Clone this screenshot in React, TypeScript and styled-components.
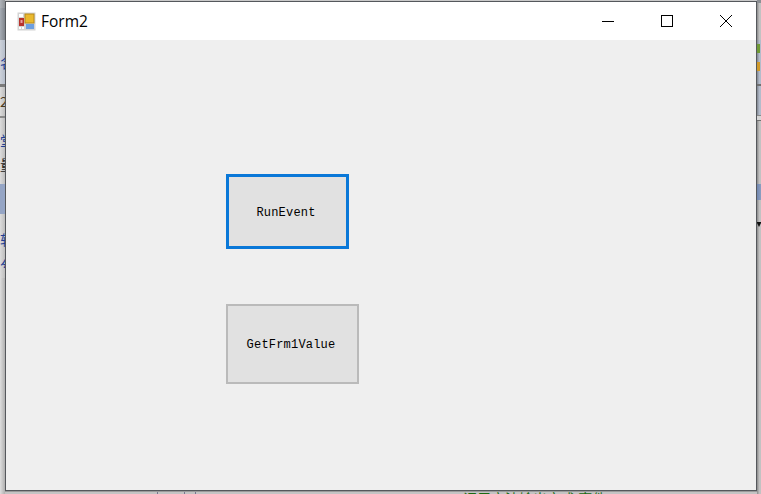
import styled, { createGlobalStyle } from "styled-components";

const GlobalStyle = createGlobalStyle`
  html, body {
    margin: 0;
    padding: 0;
    width: 761px;
    height: 494px;
    overflow: hidden;
    background: #c9c9c9;
  }
`;

const Desktop = styled.div`
  display: flex;
  width: 761px;
  height: 494px;
  overflow: hidden;
`;

// the IDE peeking out behind the form, only a few pixels on each side
const SideStrip = styled.div<{ $w: number }>`
  display: flex;
  flex-direction: column;
  width: ${(p) => p.$w}px;
  height: 494px;
  flex: none;
  overflow: hidden;
`;

const StripBand = styled.div<{ $h: number; $color: string; $ink?: string }>`
  flex: none;
  height: ${(p) => p.$h}px;
  background: ${(p) => p.$color};
  color: ${(p) => p.$ink || "#1f3f95"};
  font: 14px/${(p) => p.$h}px "Noto Sans CJK SC", sans-serif;
  white-space: nowrap;
  overflow: hidden;
`;

const DropArrow = styled.svg`
  display: block;
  width: 4px;
  height: 5px;
`;

const WindowColumn = styled.div`
  display: flex;
  flex-direction: column;
  width: 752px;
  flex: none;
  padding-top: 1px;
`;

const FormWindow = styled.div`
  display: flex;
  flex-direction: column;
  flex: none;
  box-sizing: border-box;
  width: 752px;
  height: 490px;
  border: 1px solid #55585c;
  background: #efefef;
`;

const BottomStrip = styled.div`
  display: flex;
  flex: 1;
  overflow: hidden;
  background: #c4c4c4;
  border-top: 1px solid #9a9a9a;
`;

const BottomLine = styled.div<{ $gap: number }>`
  width: 1px;
  flex: none;
  margin-left: ${(p) => p.$gap}px;
  background: #77778f;
`;

const BottomText = styled.div`
  margin-left: 267px;
  margin-top: -1px;
  font: 14px/14px "Noto Sans CJK SC", sans-serif;
  color: #1b6b12;
  white-space: nowrap;
`;

const TitleBar = styled.div`
  display: flex;
  align-items: center;
  flex: none;
  height: 38px;
  padding: 0 1px 0 11px;
  background: #fff;
`;

const AppIcon = styled.svg`
  width: 19px;
  height: 19px;
  flex: none;
`;

const TitleText = styled.span`
  margin-left: 5px;
  font: 15.5px "Open Sans", sans-serif;
  color: #000;
`;

const WindowButtons = styled.div`
  display: flex;
  margin-left: auto;
  height: 100%;
`;

const WindowButton = styled.div`
  display: flex;
  align-items: center;
  justify-content: center;
  width: 59px;
  height: 100%;
`;

const Glyph = styled.svg`
  width: 14px;
  height: 14px;
  fill: none;
  stroke: #000;
  stroke-width: 1;
  shape-rendering: crispEdges;
`;

const ClientArea = styled.div`
  display: flex;
  flex-direction: column;
  align-items: flex-start;
  gap: 55px;
  flex: 1;
  padding: 134px 0 0 220px;
`;

const FormButton = styled.button<{ $w: number; $h: number; $focused?: boolean }>`
  box-sizing: border-box;
  width: ${(p) => p.$w}px;
  height: ${(p) => p.$h}px;
  padding: 2px 3px 0 0;
  background: #e1e1e1;
  border: ${(p) => (p.$focused ? "3px solid #0a78d8" : "2px solid #bababa")};
  border-radius: 0;
  color: #000;
  font: 12px "Liberation Mono", monospace;
  letter-spacing: 0.2px;
`;

const leftGray = "linear-gradient(90deg,#dcdcdc,#bdbdbd)";
const leftBlue = "linear-gradient(90deg,#cdd2da,#b4bcc9)";
const rightGray = "linear-gradient(90deg,#8a8a8a,#c2c2c2 60%)";
const rightBlue = "linear-gradient(90deg,#7f858f,#b3bccb 60%)";

const App = () => {
  return (
    <>
      <GlobalStyle />
      <Desktop>
        <SideStrip $w={5}>
          <StripBand $h={8} $color="linear-gradient(90deg,#b0b4ba,#8f9296)" />
          <StripBand $h={32} $color="linear-gradient(90deg,#a6acb4,#80858c)" />
          <StripBand $h={44} $color={leftBlue}>
            名
          </StripBand>
          <StripBand $h={3} $color="#7a7a7a" />
          <StripBand $h={29} $color={leftGray} $ink="#4a3a20">
            2
          </StripBand>
          <StripBand $h={2} $color="#8a8a8a" />
          <StripBand $h={10} $color={leftGray} />
          <StripBand $h={24} $color={leftGray}>
            堂
          </StripBand>
          <StripBand $h={24} $color={leftGray} $ink="#222">
            量
          </StripBand>
          <StripBand $h={8} $color={leftGray} />
          <StripBand $h={30} $color="#95a5c5" />
          <StripBand $h={12} $color={leftGray} />
          <StripBand $h={26} $color={leftGray}>
            软
          </StripBand>
          <StripBand $h={26} $color={leftGray}>
            兮
          </StripBand>
          <StripBand $h={216} $color="linear-gradient(90deg,#dedede,#b0b0b0)" />
        </SideStrip>
        <WindowColumn>
          <FormWindow>
            <TitleBar>
              <AppIcon viewBox="0 0 19 19">
                <rect x="0.5" y="0.5" width="18" height="18" fill="#d4d4d4" />
                <rect x="2" y="2" width="4" height="3" fill="#fff" />
                <rect x="8" y="2" width="9" height="9" fill="#eab92e" stroke="#b88a1a" />
                <rect x="2" y="6" width="5" height="8" fill="#b8322c" />
                <rect x="3.5" y="8" width="2" height="3" fill="#e9a0a0" />
                <rect x="9" y="12" width="8" height="5" fill="#6d9fe0" />
                <rect x="2" y="15" width="2" height="2" fill="#fff" />
                <rect x="5" y="15" width="2" height="2" fill="#fff" />
              </AppIcon>
              <TitleText>Form2</TitleText>
              <WindowButtons>
                <WindowButton>
                  <Glyph viewBox="0 0 14 14">
                    <path d="M1 7.5h12" />
                  </Glyph>
                </WindowButton>
                <WindowButton>
                  <Glyph viewBox="0 0 14 14">
                    <rect x="1.5" y="1.5" width="11" height="11" />
                  </Glyph>
                </WindowButton>
                <WindowButton>
                  <svg width="14" height="14" viewBox="0 0 14 14" fill="none" stroke="#000">
                    <path d="M1 1l12 12M13 1L1 13" />
                  </svg>
                </WindowButton>
              </WindowButtons>
            </TitleBar>
            <ClientArea>
              <FormButton $w={123} $h={75} $focused>
                RunEvent
              </FormButton>
              <FormButton $w={133} $h={80}>
                GetFrm1Value
              </FormButton>
            </ClientArea>
          </FormWindow>
          <BottomStrip>
            <BottomLine $gap={152} />
            <BottomLine $gap={26} />
            <BottomLine $gap={10} />
            <BottomText>调用方法输出完成 事件</BottomText>
          </BottomStrip>
        </WindowColumn>
        <SideStrip $w={4}>
          <StripBand $h={3} $color="#8c8f94" />
          <StripBand $h={37} $color={rightGray} />
          <StripBand $h={4} $color={rightBlue} />
          <StripBand $h={9} $color="linear-gradient(90deg,#6f9a35 75%,#b3bccb 75%)" />
          <StripBand $h={9} $color={rightBlue} />
          <StripBand $h={9} $color="linear-gradient(90deg,#d09a2a 75%,#b3bccb 75%)" />
          <StripBand $h={13} $color={rightBlue} />
          <StripBand $h={2} $color="#707070" />
          <StripBand $h={29} $color={rightBlue} />
          <StripBand $h={1} $color="#8a8a8a" />
          <StripBand $h={4} $color="#d6d6d6" />
          <StripBand $h={1} $color="#707070" />
          <StripBand $h={63} $color={rightGray} />
          <StripBand $h={16} $color="linear-gradient(90deg,#6f85ad,#8da0c2)" />
          <StripBand $h={22} $color={rightGray} />
          <StripBand $h={5} $color={rightGray}>
            <DropArrow viewBox="0 0 4 5">
              <path d="M0 0h4v1L2 5 0 1z" fill="#111" />
            </DropArrow>
          </StripBand>
          <StripBand $h={267} $color={rightGray} />
        </SideStrip>
      </Desktop>
    </>
  );
};

export default App;
